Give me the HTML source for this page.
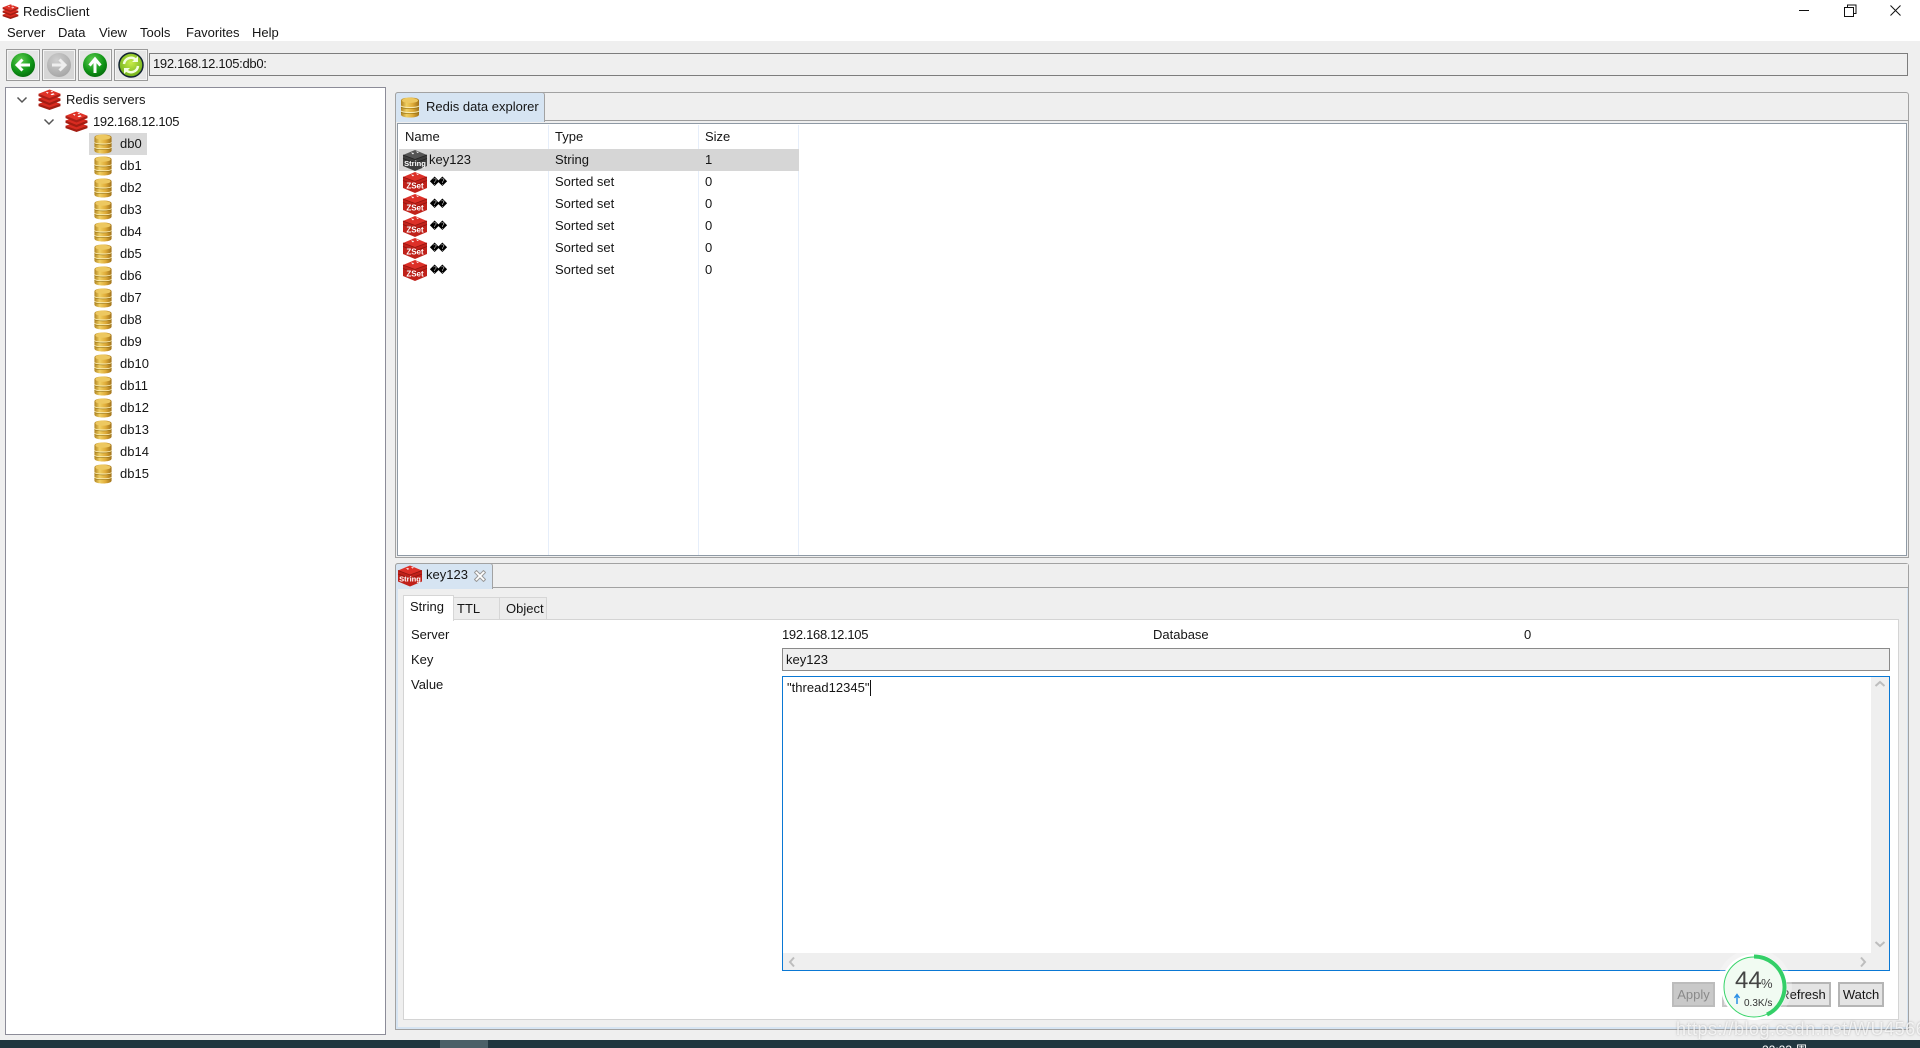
<!DOCTYPE html>
<html><head><meta charset="utf-8"><title>RedisClient</title>
<style>
*{box-sizing:border-box}
html,body{margin:0;padding:0;width:1920px;height:1048px;overflow:hidden;background:#efefef;font:13px/16px "Liberation Sans","Noto Sans CJK SC",sans-serif;color:#151515;letter-spacing:0}
.a{position:absolute}
.t{position:absolute;white-space:nowrap}
.n{letter-spacing:-.3px}
.q{font-size:9px;font-weight:700;color:#000;letter-spacing:-1.500px}
.btn{position:absolute;top:982px;height:25px;border:2px solid #b5b5b5;background:#e4e4e4;text-align:center;line-height:21px}
.tb{position:absolute;top:49px;width:34px;height:32px;border:1px solid #9a9a9a;background:#e6e6e6;box-shadow:inset 0 0 0 1px #f4f4f4}
.tb svg{position:absolute;left:3px;top:2px}
</style></head>
<body>
<svg width="0" height="0" style="position:absolute">
<defs>
<linearGradient id="gold" x1="0" x2="1" y1="0" y2="0"><stop offset="0" stop-color="#b08320"/><stop offset=".3" stop-color="#f0cf62"/><stop offset=".65" stop-color="#dfab38"/><stop offset="1" stop-color="#a0721a"/></linearGradient>
<radialGradient id="gr" cx=".4" cy=".3" r=".8"><stop offset="0" stop-color="#5fce50"/><stop offset=".6" stop-color="#0f9416"/><stop offset="1" stop-color="#04620a"/></radialGradient>
<radialGradient id="gy" cx=".4" cy=".3" r=".8"><stop offset="0" stop-color="#cfcfcf"/><stop offset="1" stop-color="#a2a2a2"/></radialGradient>
<radialGradient id="lm" cx=".5" cy=".4" r=".7"><stop offset="0" stop-color="#c8ec4a"/><stop offset="1" stop-color="#5fa511"/></radialGradient>
<symbol id="redis" viewBox="0 0 24 22">
<path d="M.5 15.500v2.500l11.500 4 11.500-4v-2.500z" fill="#a31d12"/><path d="M.5 15.500l11.500-4 11.500 4-11.500 4z" fill="#d92b20"/>
<path d="M.5 10v2.500l11.500 4.500 11.500-4.500V10z" fill="#a31d12"/><path d="M.5 10l11.500-4 11.500 4-11.500 4.500z" fill="#d92b20"/>
<path d="M.5 5v2.500L12 12l11.500-4.500V5z" fill="#ac1f17"/><path d="M.5 5L12 .5 23.500 5 12 9.500z" fill="#df3227"/>
<path d="M8 3l3 .5-1 1.500zM13 2l3 .5-1.500 1zM13 5.500l3-1 1.500 1-3 1z" fill="#fff"/>
</symbol>
<symbol id="db" viewBox="0 0 20 21">
<path d="M1 3.500C1 1.500 5 .5 10 .5s9 1 9 3V17.500c0 2-4 3-9 3s-9-1-9-3z" fill="url(#gold)"/>
<ellipse cx="10" cy="3.500" rx="8" ry="2.500" fill="#edc860"/>
<path d="M1 9c2 2 16 2 18 0M1 14c2 2 16 2 18 0" fill="none" stroke="#fbeeb8" stroke-width="1"/>
<path d="M1 10c2 2 16 2 18 0M1 15c2 2 16 2 18 0" fill="none" stroke="#93700f" stroke-width=".6"/>
</symbol>
<symbol id="zset" viewBox="0 0 26 22">
<path d="M1 6v11l12 5 12-5V6z" fill="#c0211a"/><path d="M1 6l12-5 12 5-12 4.500z" fill="#dd3028"/>
<path d="M1 9.500l12 4.500 12-4.500M1 6l12 4.500L25 6" fill="none" stroke="#8f150f" stroke-width=".8"/>
<path d="M9 3.500l3 .5-1 1.500zM14 2.500l3 .5-1.500 1z" fill="#fff"/>
<text x="13" y="17.500" font-family="Liberation Sans" font-weight="700" font-size="8" fill="#fff" text-anchor="middle" letter-spacing="0">ZSet</text>
</symbol>
<symbol id="str" viewBox="0 0 26 22">
<path d="M1 6v11l12 5 12-5V6z" fill="#3c3c3c"/><path d="M1 6l12-5 12 5-12 4.500z" fill="#555"/>
<path d="M1 9.500l12 4.500 12-4.500M1 6l12 4.500L25 6" fill="none" stroke="#222" stroke-width=".8"/>
<path d="M9 3.500l3 .5-1 1.500zM14 2.500l3 .5-1.500 1z" fill="#fff"/>
<text x="13" y="17" font-family="Liberation Sans" font-weight="700" font-size="7.500" fill="#fff" text-anchor="middle" letter-spacing="0">String</text>
</symbol>
<symbol id="strr" viewBox="0 0 26 22">
<path d="M1 6v11l12 5 12-5V6z" fill="#c0211a"/><path d="M1 6l12-5 12 5-12 4.500z" fill="#dd3028"/>
<path d="M1 9.500l12 4.500 12-4.500M1 6l12 4.500L25 6" fill="none" stroke="#8f150f" stroke-width=".8"/>
<path d="M9 3.500l3 .5-1 1.500zM14 2.500l3 .5-1.500 1z" fill="#fff"/>
<text x="13" y="17" font-family="Liberation Sans" font-weight="700" font-size="7.500" fill="#fff" text-anchor="middle" letter-spacing="0">String</text>
</symbol>
</defs></svg>

<!-- title + menu -->
<div class="a" style="left:0;top:0;width:1920px;height:41px;background:#fff"></div>
<svg class="a" style="left:2px;top:4px" width="17" height="15"><use href="#redis" width="17" height="15"/></svg>
<div class="t" style="left:23px;top:4px">RedisClient</div>
<div class="t" style="left:7px;top:25px">Server</div>
<div class="t" style="left:58px;top:25px">Data</div>
<div class="t" style="left:99px;top:25px">View</div>
<div class="t" style="left:140px;top:25px">Tools</div>
<div class="t" style="left:186px;top:25px">Favorites</div>
<div class="t" style="left:252px;top:25px">Help</div>
<svg class="a" style="left:1780px;top:0" width="140" height="24" fill="none" stroke="#111" stroke-width="1">
<path d="M19 10.500h10"/><path d="M64.500 7.500h9v9h-9zM67.500 7.500v-2.500h8.500v8.500h-2.500"/><path d="M110.500 5.500l10 10M120.500 5.500l-10 10"/>
</svg>

<!-- toolbar -->
<div class="tb" style="left:6px"><svg width="26" height="26"><circle cx="13" cy="13" r="12" fill="url(#gr)"/><path d="M20 13H8M12.500 7.500L7 13l5.500 5.500" fill="none" stroke="#fff" stroke-width="3"/></svg></div>
<div class="tb" style="left:42px;background:#d6d6d6"><svg width="26" height="26"><circle cx="13" cy="13" r="12" fill="url(#gy)"/><path d="M6 13h12M13.500 7.500L19 13l-5.500 5.500" fill="none" stroke="#eee" stroke-width="3"/></svg></div>
<div class="tb" style="left:78px"><svg width="26" height="26"><circle cx="13" cy="13" r="12" fill="url(#gr)"/><path d="M13 21V8M7.500 13.500L13 7l5.500 6.500" fill="none" stroke="#fff" stroke-width="3"/></svg></div>
<div class="tb" style="left:114px"><svg width="26" height="26"><circle cx="13" cy="13" r="12" fill="url(#lm)" stroke="#123" stroke-width="1.500"/><path d="M6 12a7 7 0 0 1 12-4M20 14a7 7 0 0 1-12 4" fill="none" stroke="#f4ffe0" stroke-width="2.500"/><path d="M20 4v6h-6zM6 22v-6h6z" fill="#f4ffe0"/></svg></div>
<div class="a" style="left:149px;top:53px;width:1759px;height:23px;border:1px solid #7d7d7d;background:#efefef"></div>
<div class="t n" style="left:153px;top:56px">192.168.12.105:db0:</div>

<!-- tree -->
<div class="a" style="left:5px;top:87px;width:381px;height:948px;background:#fff;border:1px solid #8c8c98"></div>
<svg class="a" style="left:16px;top:96px" width="12" height="8" fill="none" stroke="#555" stroke-width="1.500"><path d="M1.500 1.500L6 6l4.500-4.500"/></svg>
<svg class="a" style="left:43px;top:118px" width="12" height="8" fill="none" stroke="#555" stroke-width="1.500"><path d="M1.500 1.500L6 6l4.500-4.500"/></svg>
<svg class="a" style="left:37px;top:89px" width="25" height="21"><use href="#redis" width="25" height="21"/></svg>
<div class="t" style="left:66px;top:92px">Redis servers</div>
<svg class="a" style="left:64px;top:111px" width="25" height="21"><use href="#redis" width="25" height="21"/></svg>
<div class="t n" style="left:93px;top:114px">192.168.12.105</div>
<div class="a" style="left:89px;top:133px;width:58px;height:22px;background:#d9d9d9"></div>
<svg class="a" style="left:93px;top:134px" width="20" height="20"><use href="#db" width="20" height="20"/></svg><div class="t" style="left:120px;top:136px">db0</div>
<svg class="a" style="left:93px;top:156px" width="20" height="20"><use href="#db" width="20" height="20"/></svg><div class="t" style="left:120px;top:158px">db1</div>
<svg class="a" style="left:93px;top:178px" width="20" height="20"><use href="#db" width="20" height="20"/></svg><div class="t" style="left:120px;top:180px">db2</div>
<svg class="a" style="left:93px;top:200px" width="20" height="20"><use href="#db" width="20" height="20"/></svg><div class="t" style="left:120px;top:202px">db3</div>
<svg class="a" style="left:93px;top:222px" width="20" height="20"><use href="#db" width="20" height="20"/></svg><div class="t" style="left:120px;top:224px">db4</div>
<svg class="a" style="left:93px;top:244px" width="20" height="20"><use href="#db" width="20" height="20"/></svg><div class="t" style="left:120px;top:246px">db5</div>
<svg class="a" style="left:93px;top:266px" width="20" height="20"><use href="#db" width="20" height="20"/></svg><div class="t" style="left:120px;top:268px">db6</div>
<svg class="a" style="left:93px;top:288px" width="20" height="20"><use href="#db" width="20" height="20"/></svg><div class="t" style="left:120px;top:290px">db7</div>
<svg class="a" style="left:93px;top:310px" width="20" height="20"><use href="#db" width="20" height="20"/></svg><div class="t" style="left:120px;top:312px">db8</div>
<svg class="a" style="left:93px;top:332px" width="20" height="20"><use href="#db" width="20" height="20"/></svg><div class="t" style="left:120px;top:334px">db9</div>
<svg class="a" style="left:93px;top:354px" width="20" height="20"><use href="#db" width="20" height="20"/></svg><div class="t" style="left:120px;top:356px">db10</div>
<svg class="a" style="left:93px;top:376px" width="20" height="20"><use href="#db" width="20" height="20"/></svg><div class="t" style="left:120px;top:378px">db11</div>
<svg class="a" style="left:93px;top:398px" width="20" height="20"><use href="#db" width="20" height="20"/></svg><div class="t" style="left:120px;top:400px">db12</div>
<svg class="a" style="left:93px;top:420px" width="20" height="20"><use href="#db" width="20" height="20"/></svg><div class="t" style="left:120px;top:422px">db13</div>
<svg class="a" style="left:93px;top:442px" width="20" height="20"><use href="#db" width="20" height="20"/></svg><div class="t" style="left:120px;top:444px">db14</div>
<svg class="a" style="left:93px;top:464px" width="20" height="20"><use href="#db" width="20" height="20"/></svg><div class="t" style="left:120px;top:466px">db15</div>

<!-- top panel -->
<div class="a" style="left:395px;top:92px;width:1514px;height:466px;border:1px solid #a2a2a2;border-radius:3px 3px 0 0;background:#efefef"></div>
<div class="a" style="left:396px;top:120px;width:1512px;height:1px;background:#9e9e9e"></div>
<div class="a" style="left:395px;top:92px;width:150px;height:30px;background:#d6e4f2;border:1px solid #a2a2a2;border-bottom:0;border-radius:3px 3px 0 0"></div>
<svg class="a" style="left:400px;top:96px" width="20" height="23"><use href="#db" width="20" height="23"/></svg>
<div class="t" style="left:426px;top:99px">Redis data explorer</div>
<div class="a" style="left:397px;top:123px;width:1510px;height:433px;background:#fff;border:1px solid #8f9aa5"></div>
<div class="a" style="left:548px;top:125px;width:1px;height:430px;background:#e6eefa"></div>
<div class="a" style="left:698px;top:125px;width:1px;height:430px;background:#e6eefa"></div>
<div class="a" style="left:798px;top:125px;width:1px;height:430px;background:#e6eefa"></div>
<div class="t" style="left:405px;top:129px">Name</div><div class="t" style="left:555px;top:129px">Type</div><div class="t" style="left:705px;top:129px">Size</div>
<div class="a" style="left:399px;top:149px;width:400px;height:22px;background:#d6d6d6"></div>
<svg class="a" style="left:402px;top:149px" width="26" height="22"><use href="#str" width="26" height="22"/></svg>
<div class="t" style="left:429px;top:152px">key123</div><div class="t" style="left:555px;top:152px">String</div><div class="t" style="left:705px;top:152px">1</div>
<svg class="a" style="left:402px;top:171px" width="26" height="22"><use href="#zset" width="26" height="22"/></svg>
<div class="t q" style="left:430px;top:174px">��</div><div class="t" style="left:555px;top:174px">Sorted set</div><div class="t" style="left:705px;top:174px">0</div>
<svg class="a" style="left:402px;top:193px" width="26" height="22"><use href="#zset" width="26" height="22"/></svg>
<div class="t q" style="left:430px;top:196px">��</div><div class="t" style="left:555px;top:196px">Sorted set</div><div class="t" style="left:705px;top:196px">0</div>
<svg class="a" style="left:402px;top:215px" width="26" height="22"><use href="#zset" width="26" height="22"/></svg>
<div class="t q" style="left:430px;top:218px">��</div><div class="t" style="left:555px;top:218px">Sorted set</div><div class="t" style="left:705px;top:218px">0</div>
<svg class="a" style="left:402px;top:237px" width="26" height="22"><use href="#zset" width="26" height="22"/></svg>
<div class="t q" style="left:430px;top:240px">��</div><div class="t" style="left:555px;top:240px">Sorted set</div><div class="t" style="left:705px;top:240px">0</div>
<svg class="a" style="left:402px;top:259px" width="26" height="22"><use href="#zset" width="26" height="22"/></svg>
<div class="t q" style="left:430px;top:262px">��</div><div class="t" style="left:555px;top:262px">Sorted set</div><div class="t" style="left:705px;top:262px">0</div>

<!-- bottom panel -->
<div class="a" style="left:395px;top:563px;width:1514px;height:467px;border:1px solid #a2a2a2;border-radius:3px 3px 0 0;background:#d6e4f2"></div>
<div class="a" style="left:396px;top:564px;width:1512px;height:24px;background:#efefef"></div>
<div class="a" style="left:398px;top:588px;width:1509px;height:439px;background:#efefef"></div>
<div class="a" style="left:396px;top:587px;width:1512px;height:1px;background:#a2a2a2"></div>
<div class="a" style="left:395px;top:563px;width:98px;height:26px;background:#d6e4f2;border:1px solid #a2a2a2;border-bottom:0;border-radius:3px 3px 0 0"></div>
<svg class="a" style="left:397px;top:564px" width="26" height="23"><use href="#strr" width="26" height="23"/></svg>
<div class="t" style="left:426px;top:567px">key123</div>
<svg class="a" style="left:474px;top:570px" width="12" height="12" fill="#fff" stroke="#9a9a9a"><path d="M.5 2.500l2-2 3.500 3.500 3.500-3.500 2 2-3.500 3.500 3.500 3.500-2 2-3.500-3.500-3.500 3.500-2-2 3.500-3.500z"/></svg>

<div class="a" style="left:403px;top:619px;width:1496px;height:401px;background:#fff;border:1px solid #d4d4d4"></div>
<div class="a" style="left:453px;top:597px;width:47px;height:23px;background:#ececec;border:1px solid #d6d6d6"></div>
<div class="a" style="left:499px;top:597px;width:48px;height:23px;background:#ececec;border:1px solid #d6d6d6"></div>
<div class="a" style="left:403px;top:595px;width:51px;height:26px;background:#fff;border:1px solid #d6d6d6;border-bottom:0"></div>
<div class="t" style="left:410px;top:599px">String</div>
<div class="t" style="left:457px;top:601px">TTL</div>
<div class="t" style="left:506px;top:601px">Object</div>
<div class="t" style="left:411px;top:627px">Server</div>
<div class="t n" style="left:782px;top:627px">192.168.12.105</div>
<div class="t" style="left:1153px;top:627px">Database</div>
<div class="t" style="left:1524px;top:627px">0</div>
<div class="t" style="left:411px;top:652px">Key</div>
<div class="a" style="left:782px;top:648px;width:1108px;height:23px;background:#efefef;border:1px solid #8a8a8a"></div>
<div class="t" style="left:786px;top:652px">key123</div>
<div class="t" style="left:411px;top:677px">Value</div>
<div class="a" style="left:782px;top:676px;width:1108px;height:295px;background:#efefef;border:1px solid #0a78d4"></div>
<div class="a" style="left:783px;top:677px;width:1088px;height:276px;background:#fff"></div>
<div class="t" style="left:787px;top:680px;letter-spacing:.02px">"thread12345"</div>
<div class="a" style="left:870px;top:680px;width:1px;height:16px;background:#111"></div>
<svg class="a" style="left:1874px;top:680px" width="12" height="8" fill="none" stroke="#bdbdbd" stroke-width="2"><path d="M1.500 6L6 2l4.500 4"/></svg>
<svg class="a" style="left:1874px;top:940px" width="12" height="8" fill="none" stroke="#bdbdbd" stroke-width="2"><path d="M1.500 2L6 6l4.500-4"/></svg>
<svg class="a" style="left:788px;top:956px" width="8" height="12" fill="none" stroke="#bdbdbd" stroke-width="2"><path d="M6 1.500L2 6l4 4.500"/></svg>
<svg class="a" style="left:1859px;top:956px" width="8" height="12" fill="none" stroke="#bdbdbd" stroke-width="2"><path d="M2 1.500L6 6l-4 4.500"/></svg>

<div class="btn" style="left:1672px;width:43px;background:#c9c9c9;border-color:#bcbcbc;color:#8a8a8a">Apply</div>
<div class="btn" style="left:1722px;width:46px;background:#d8d8d8;color:#aaa">Cancel</div>
<div class="btn" style="left:1775px;width:56px">Refresh</div>
<div class="btn" style="left:1838px;width:46px">Watch</div>

<!-- floating widget -->
<svg class="a" style="left:1714px;top:947px" width="80" height="80">
<circle cx="40" cy="40" r="38" fill="#fff" fill-opacity=".25"/>
<circle cx="40" cy="40" r="33" fill="#fff"/>
<circle cx="40" cy="40" r="30" fill="#f1fbf2" stroke="#38d46a" stroke-width="1"/>
<path d="M40 9.500A30.500 30.500 0 0 1 53 67.600" fill="none" stroke="#34cf68" stroke-width="4"/>
<text x="21" y="41" font-family="Liberation Sans" font-size="24" fill="#444" letter-spacing="0">44</text>
<text x="47" y="41" font-family="Liberation Sans" font-size="13" fill="#444" letter-spacing="0">%</text>
<path d="M23 57v-9M20.500 51l2.500-3.500 2.500 3.500" fill="none" stroke="#2b8fe6" stroke-width="1.500"/>
<text x="30" y="59" font-family="Liberation Sans" font-size="10" fill="#333" letter-spacing="0">0.3K/s</text>
</svg>

<!-- taskbar -->
<div class="a" style="left:0;top:1040px;width:1920px;height:8px;background:#20363f;overflow:hidden">
<div class="a" style="left:440px;top:0;width:48px;height:8px;background:#4b6068"></div>
<div class="t" style="left:1762px;top:2px;color:#fff;font-size:12px">22:23 周一</div>
</div>
<!-- watermark -->
<div class="t" style="left:1676px;top:1018px;font-size:18px;line-height:22px;color:rgba(255,255,255,.75);letter-spacing:.5px;text-shadow:0 0 2px rgba(120,120,120,.55)">https://blog.csdn.net/WU4566285</div>
</body></html>
